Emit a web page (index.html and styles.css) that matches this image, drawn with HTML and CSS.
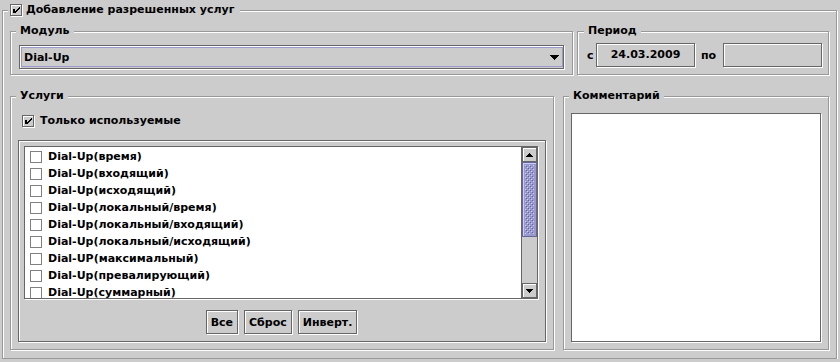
FILE: index.html
```html
<!DOCTYPE html>
<html lang="ru">
<head>
  <meta charset="UTF-8">
  <title>Добавление разрешенных услуг</title>
  <link rel="stylesheet" href="styles.css">
</head>
<body>

<div class="group outer">
  <div class="title">
    <span class="check"><svg width="10" height="10" viewBox="1 1 10 10"><path d="M3 5h2v4h-2z M5 7h1v2h-1z M6 6h1v2h-1z M7 5h1v2h-1z M8 4h1v2h-1z M9 3h1v2h-1z"/></svg></span>
    Добавление разрешенных услуг
  </div>

  <div class="row top-row">
    <div class="group module">
      <div class="title">Модуль</div>
      <div class="combo">
        <div class="combo-focus">
          <span class="combo-text">Dial-Up</span>
          <svg class="combo-arrow" width="9" height="5" viewBox="0 0 9 5"><path d="M0 0h9v1h-1v1h-1v1h-1v1h-1v1h-1v-1h-1v-1h-1v-1h-1v-1h-1z"/></svg>
        </div>
      </div>
    </div>

    <div class="group period">
      <div class="title">Период</div>
      <div class="period-row">
        <span class="lbl lbl-from">с</span>
        <div class="field">24.03.2009</div>
        <span class="lbl lbl-to">по</span>
        <div class="field"></div>
      </div>
    </div>
  </div>

  <div class="row bottom-row">
    <div class="group services">
      <div class="title">Услуги</div>
      <div class="used">
        <span class="check"><svg width="10" height="10" viewBox="1 1 10 10"><path d="M3 5h2v4h-2z M5 7h1v2h-1z M6 6h1v2h-1z M7 5h1v2h-1z M8 4h1v2h-1z M9 3h1v2h-1z"/></svg></span>
        Только используемые
      </div>

      <div class="list-box">
        <div class="scroll-pane">
          <div class="list">
            <div class="item"><span class="box"></span>Dial-Up(время)</div>
            <div class="item"><span class="box"></span>Dial-Up(входящий)</div>
            <div class="item"><span class="box"></span>Dial-Up(исходящий)</div>
            <div class="item"><span class="box"></span>Dial-Up(локальный/время)</div>
            <div class="item"><span class="box"></span>Dial-Up(локальный/входящий)</div>
            <div class="item"><span class="box"></span>Dial-Up(локальный/исходящий)</div>
            <div class="item"><span class="box"></span>Dial-UP(максимальный)</div>
            <div class="item"><span class="box"></span>Dial-Up(превалирующий)</div>
            <div class="item"><span class="box"></span>Dial-Up(суммарный)</div>
          </div>
          <div class="vscroll">
            <div class="sb-btn">
              <svg width="7" height="4" viewBox="0 0 7 4"><path d="M3 0h1v1h1v1h1v1h1v1h-7v-1h1v-1h1v-1h1z"/></svg>
            </div>
            <div class="sb-track">
              <div class="sb-thumb">
                <svg width="100%" height="100%">
                  <defs>
                    <pattern id="bumps" width="4" height="4" patternUnits="userSpaceOnUse">
                      <rect x="0" y="0" width="1" height="1" fill="#ccccff"/>
                      <rect x="2" y="2" width="1" height="1" fill="#ccccff"/>
                      <rect x="1" y="1" width="1" height="1" fill="#666699"/>
                      <rect x="3" y="3" width="1" height="1" fill="#666699"/>
                    </pattern>
                  </defs>
                  <rect x="0" y="0" width="100%" height="100%" fill="url(#bumps)"/>
                </svg>
              </div>
            </div>
            <div class="sb-btn">
              <svg width="7" height="4" viewBox="0 0 7 4"><path d="M0 0h7v1h-1v1h-1v1h-1v1h-1v-1h-1v-1h-1v-1h-1z"/></svg>
            </div>
          </div>
        </div>

        <div class="buttons">
          <button class="btn">Все</button>
          <button class="btn">Сброс</button>
          <button class="btn">Инверт.</button>
        </div>
      </div>
    </div>

    <div class="group comment">
      <div class="title">Комментарий</div>
      <div class="textarea"></div>
    </div>
  </div>
</div>

</body>
</html>
```

FILE: styles.css
```css
* {
  box-sizing: border-box;
}

body {
  margin: 0;
  background-color: #cccccc;
  font-family: "DejaVu Sans", sans-serif;
  font-size: 11px;
  font-weight: bold;
  color: #000;
}

/* etched titled border */
.group {
  border: 1px solid #999999;
  box-shadow: 1px 1px 0 #fff, inset 1px 1px 0 #fff;
}

.title {
  display: flex;
  align-items: center;
  width: max-content;
  height: 14px;
  line-height: 14px;
  margin: -8px 0 0 -3px;
  padding: 0 4px;
  background-color: #cccccc;
  white-space: nowrap;
}

.row {
  display: flex;
}

.outer {
  display: flex;
  flex-direction: column;
  width: 835px;
  height: 349px;
  margin: 10px 0 0 2px;
  padding: 0 7px 8px;
}

.outer > .title {
  margin-left: -2px;
  padding: 0 6px 0 2px;
}

.outer > .title .check {
  margin-right: 4px;
}

.top-row {
  margin-top: 14px;
  height: 44px;
  gap: 4px;
}

.bottom-row {
  margin-top: 21px;
  height: 254px;
  gap: 9px;
}

/* checkbox */
.check {
  display: inline-block;
  width: 12px;
  height: 12px;
  border: 1px solid #666666;
  box-shadow: 1px 1px 0 #fff, inset 1px 1px 0 #fff;
  flex-shrink: 0;
}

.check svg {
  display: block;
}

/* module */
.module {
  width: 563px;
  padding: 0 8px;
}

.combo {
  height: 24px;
  margin-top: 7px;
  padding: 1px 0 1px 1px;
  border: 1px solid #666666;
  box-shadow: 1px 1px 0 #fff, inset 1px 1px 0 #fff;
}

.combo-focus {
  display: flex;
  align-items: center;
  height: 100%;
  padding: 0 3px 0 2px;
  border: 1px solid #9999cc;
}

.combo-text {
  flex: 1;
}

.combo-arrow {
  display: block;
}

/* period */
.period {
  width: 252px;
}

.period > .title {
  margin-left: 6px;
}

.period-row {
  display: flex;
  align-items: center;
  margin-top: 5px;
}

.lbl {
  flex-shrink: 0;
}

.lbl-from {
  width: 18px;
  padding-left: 9px;
}

.lbl-to {
  width: 28px;
  padding-left: 6px;
}

.field {
  width: 99px;
  height: 24px;
  line-height: 22px;
  text-align: center;
  border: 1px solid #666666;
  box-shadow: 1px 1px 0 #fff, inset 1px 1px 0 #fff;
}

/* services */
.services {
  width: 544px;
  padding: 0 7px;
}

.services > .title {
  margin-left: -2px;
}

.used {
  display: flex;
  align-items: center;
  height: 17px;
  margin: 9px 0 0 4px;
}

.used .check {
  margin-right: 6px;
}

.list-box {
  display: flex;
  flex-direction: column;
  width: 528px;
  height: 202px;
  margin-top: 11px;
  padding: 5px 0 0 5px;
  border: 1px solid #666666;
  box-shadow: 1px 1px 0 #fff, inset 1px 1px 0 #fff;
}

.scroll-pane {
  display: flex;
  width: 514px;
  height: 153px;
  border: 1px solid #666666;
  box-shadow: 1px 1px 0 #fff;
}

.list {
  flex: 1;
  overflow: hidden;
  background-color: #fff;
  padding: 1px 0 0 5px;
}

.item {
  display: flex;
  align-items: center;
  height: 17px;
  white-space: nowrap;
}

.box {
  width: 12px;
  height: 12px;
  margin-right: 6px;
  border: 1px solid #808080;
}

.vscroll {
  display: flex;
  flex-direction: column;
  width: 16px;
  border-left: 1px solid #666666;
}

.sb-btn {
  display: flex;
  align-items: center;
  justify-content: center;
  height: 15px;
  background-color: #cccccc;
  border: 1px solid #666666;
  box-shadow: inset 1px 1px 0 #fff;
}

.sb-track {
  flex: 1;
  background-color: #cccccc;
}

.sb-thumb {
  height: 75px;
  background-color: #9999cc;
  border: 1px solid #666699;
  box-shadow: inset 1px 1px 0 #ccccff;
  padding: 2px;
}

.sb-thumb svg {
  display: block;
}

.buttons {
  display: flex;
  justify-content: center;
  gap: 6px;
  margin-top: 11px;
  padding-right: 6px;
}

.btn {
  height: 24px;
  padding: 0 4px;
  font: inherit;
  color: #000;
  background-color: #cccccc;
  border: 1px solid #666666;
  box-shadow: 1px 1px 0 #fff, inset 1px 1px 0 #fff;
}

/* comment */
.comment {
  width: 266px;
  padding: 0 7px;
}

.comment > .title {
  margin-left: -2px;
}

.textarea {
  height: 229px;
  margin-top: 10px;
  background-color: #fff;
  border: 1px solid #666666;
  box-shadow: 1px 1px 0 #fff;
}
```
